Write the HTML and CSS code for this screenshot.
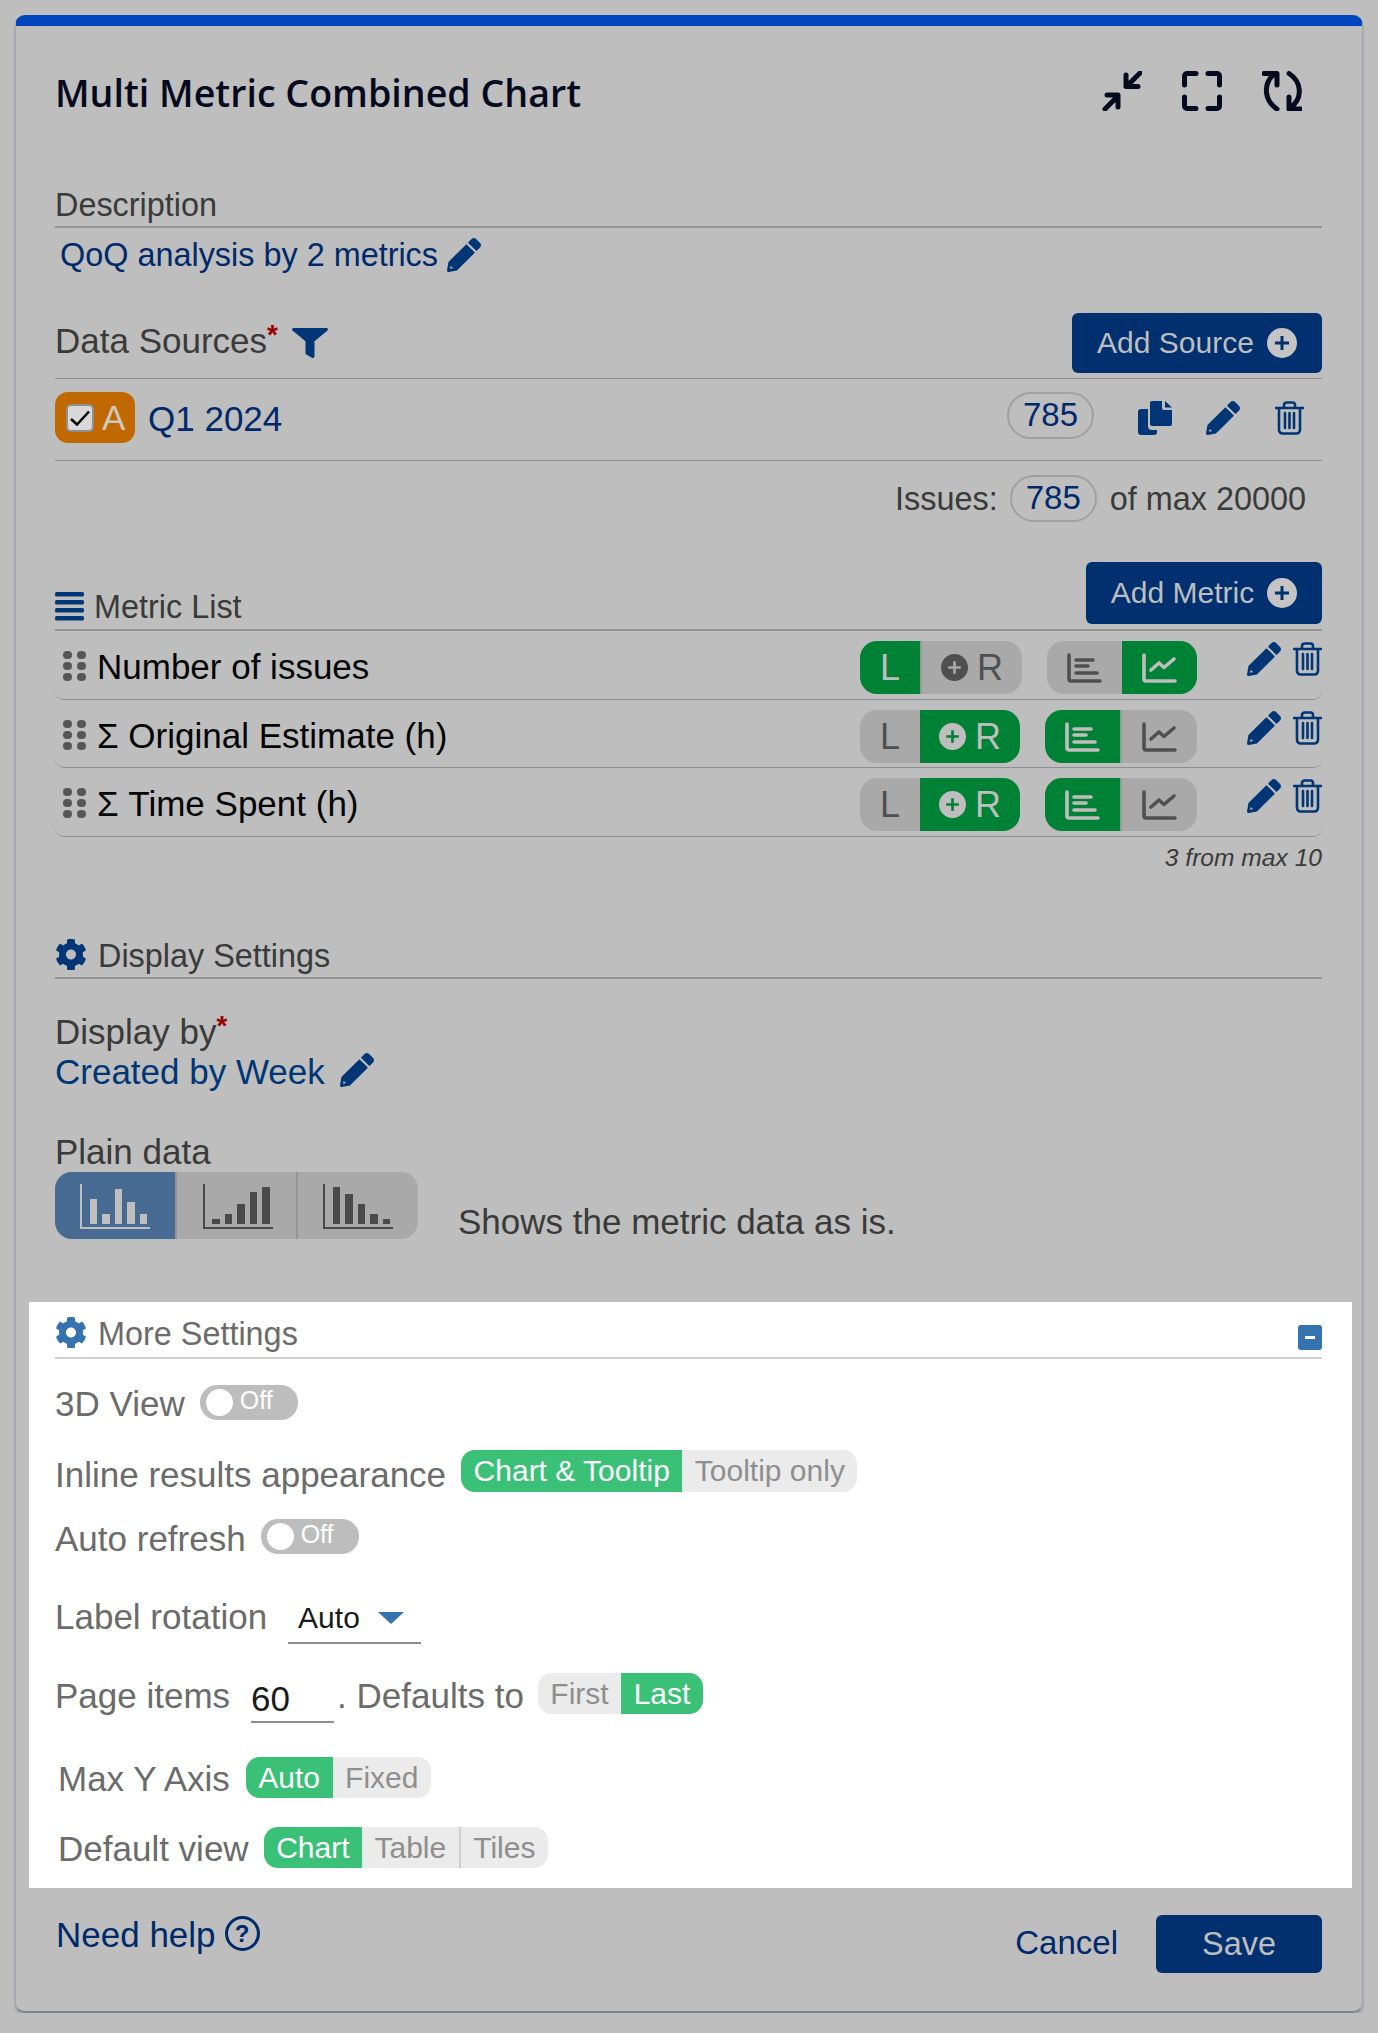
FILE: index.html
```html
<!DOCTYPE html>
<html lang="en">

<head>
    <meta charset="UTF-8">
    <meta name="viewport" content="width=device-width, initial-scale=1.0">
    <title>Multi Metric Combined Chart</title>
    <link rel="stylesheet" href="styles.css">
</head>

<body>
    <svg class="defs">
        <symbol id="pencil" viewBox="0 0 512 512">
            <path d="M497.9 142.1l-46.1 46.1c-4.7 4.7-12.3 4.7-17 0l-111-111c-4.7-4.7-4.7-12.3 0-17l46.1-46.1c18.7-18.7 49.1-18.7 67.9 0l60.1 60.1c18.800 18.700 18.800 49.100 0 67.900zM284.2 99.8L21.6 362.4.4 483.9c-2.9 16.4 11.4 30.6 27.8 27.8l121.5-21.3 262.6-262.6c4.7-4.7 4.7-12.3 0-17l-111-111c-4.8-4.7-12.4-4.7-17.1 0zM56 420L44 462L92 452z" fill="currentColor" fill-rule="evenodd"/>
        </symbol>
        <symbol id="trash" viewBox="0 0 29 34">
            <path d="M1 7H28M9 7V4a2.5 2.5 0 0 1 2.5-2.500h6A2.5 2.5 0 0 1 20 4V7M4 7V29a3.5 3.5 0 0 0 3.500 3.500h14A3.5 3.5 0 0 0 25 29V7M10 12V27M14.500 12V27M19 12V27" fill="none" stroke="currentColor" stroke-width="2.600" stroke-linecap="round"/>
        </symbol>
        <symbol id="cog" viewBox="0 0 512 512">
            <path d="M487.4 315.7l-42.6-24.6c4.3-23.2 4.3-47 0-70.2l42.6-24.6c4.9-2.8 7.1-8.6 5.5-14-11.1-35.6-30-67.8-54.7-94.6-3.8-4.1-10-5.1-14.8-2.3L380.8 110c-17.9-15.4-38.5-27.3-60.8-35.1V25.8c0-5.6-3.9-10.5-9.4-11.7-36.7-8.2-74.3-7.8-109.2 0-5.5 1.2-9.4 6.1-9.4 11.7V75c-22.2 7.9-42.8 19.8-60.8 35.1L88.7 85.5c-4.9-2.8-11-1.9-14.8 2.3-24.7 26.7-43.6 58.9-54.7 94.6-1.7 5.4.6 11.2 5.5 14L67.3 221c-4.3 23.2-4.3 47 0 70.2l-42.6 24.6c-4.9 2.8-7.1 8.6-5.5 14 11.1 35.6 30 67.8 54.7 94.6 3.8 4.1 10 5.1 14.8 2.3l42.6-24.6c17.9 15.4 38.5 27.3 60.8 35.1v49.2c0 5.6 3.9 10.5 9.4 11.7 36.7 8.2 74.3 7.8 109.2 0 5.5-1.2 9.4-6.1 9.4-11.7v-49.2c22.2-7.9 42.8-19.8 60.8-35.1l42.6 24.6c4.9 2.8 11 1.9 14.8-2.3 24.7-26.7 43.6-58.9 54.7-94.6 1.5-5.5-.7-11.3-5.6-14.1zM256 336c-44.1 0-80-35.9-80-80s35.9-80 80-80 80 35.9 80 80-35.9 80-80 80z" fill="currentColor"/>
        </symbol>
        <symbol id="bars-h" viewBox="0 0 35 30">
            <path d="M2 2V26a2 2 0 0 0 2 2H33M9 7H26M9 13H21M9 20H30" fill="none" stroke="currentColor" stroke-width="3.6" stroke-linecap="round"/>
        </symbol>
        <symbol id="line" viewBox="0 0 35 30">
            <path d="M2 2V26a2 2 0 0 0 2 2H33M9 17L17 10L22 14.5L32 6" fill="none" stroke="currentColor" stroke-width="3.6" stroke-linecap="round" stroke-linejoin="round"/>
        </symbol>
        <symbol id="grip" viewBox="0 0 23 30">
            <g fill="currentColor">
                <rect x="0" y="0" width="9" height="8" rx="4"/><rect x="14" y="0" width="9" height="8" rx="4"/>
                <rect x="0" y="11" width="9" height="8" rx="4"/><rect x="14" y="11" width="9" height="8" rx="4"/>
                <rect x="0" y="22" width="9" height="8" rx="4"/><rect x="14" y="22" width="9" height="8" rx="4"/>
            </g>
        </symbol>
        <symbol id="plus" viewBox="0 0 30 30">
            <path d="M15 0a15 15 0 1 0 0 30a15 15 0 1 0 0-30zM13.500 8h3v5.500H22v3h-5.500V22h-3v-5.500H8v-3h5.500z" fill="currentColor" fill-rule="evenodd"/>
        </symbol>
    </svg>

    <div class="card">
        <div class="title-row">
            <h1 class="title">Multi Metric Combined Chart</h1>
            <div class="title-icons">
                <svg class="top-icon" viewBox="0 0 40 40"><path d="M38 2L26 14M24 4V15.5H36M3 38L15 26M5 24H16V36" /></svg>
                <svg class="top-icon" viewBox="0 0 40 40"><path d="M2.500 14V5a2.500 2.500 0 0 1 2.500-2.500H14M26 2.500H35a2.500 2.500 0 0 1 2.500 2.500V14M2.500 26V35a2.500 2.500 0 0 0 2.500 2.500H14M26 37.500H35a2.500 2.500 0 0 0 2.500-2.500V26" /></svg>
                <svg class="top-icon" viewBox="0 0 40 40"><path d="M15 38C3 30 0 14 12 3M2 2.500H15V14M27 2.500C39 10 42 27 28 37M27 26V38H39" /></svg>
            </div>
        </div>

        <div class="heading desc-heading">Description</div>
        <div class="desc-value">QoQ analysis by 2 metrics <svg class="pencil-sm"><use href="#pencil"/></svg></div>

        <div class="source-head">
            <div class="source-label">Data Sources<sup class="req">*</sup>
                <svg class="funnel" viewBox="0 0 512 512" preserveAspectRatio="none"><path d="M487.976 0H24.028C2.71 0-8.047 25.866 7.058 40.971L192 225.941V432c0 7.831 3.821 15.17 10.237 19.662l80 55.98C298.02 518.69 320 507.493 320 487.98V225.941l184.947-184.97C520.021 25.896 509.338 0 487.976 0z" fill="currentColor"/></svg>
            </div>
            <button class="btn add-source">Add Source <svg class="btn-plus"><use href="#plus"/></svg></button>
        </div>

        <div class="source-row">
            <div class="badge"><span class="check"><svg viewBox="0 0 20 16"><path d="M1 9L7 14.5L19 1.500" fill="none" stroke="#000" stroke-width="2.5"/></svg></span>A</div>
            <div class="source-name">Q1 2024</div>
            <div class="count source-count">785</div>
            <svg class="copy" viewBox="0 0 34 34"><path d="M14 0H24V7a2 2 0 0 0 2 2H34V23a2 2 0 0 1-2 2H14a2 2 0 0 1-2-2V2a2 2 0 0 1 2-2zM27 0L34 6.500H27zM10 8V25a4 4 0 0 0 4 4H19V31a3 3 0 0 1-3 3H3a3 3 0 0 1-3-3V11a3 3 0 0 1 3-3z" fill="currentColor"/></svg>
            <svg class="pencil-sm gap-pencil"><use href="#pencil"/></svg>
            <svg class="trash gap-trash"><use href="#trash"/></svg>
        </div>

        <div class="issues-row">Issues:<span class="count issues-count">785</span>of max 20000</div>

        <div class="metric-head">
            <div class="metric-label">
                <svg class="list-icon" viewBox="0 0 29 29"><g fill="currentColor"><rect y="0" width="29" height="4.500" rx="1.500"/><rect y="8" width="29" height="4.500" rx="1.500"/><rect y="16" width="29" height="4.500" rx="1.500"/><rect y="24" width="29" height="4.500" rx="1.500"/></g></svg>
                Metric List
            </div>
            <button class="btn add-metric">Add Metric <svg class="btn-plus"><use href="#plus"/></svg></button>
        </div>

        <div class="metric-row">
            <svg class="grip"><use href="#grip"/></svg>
            <div class="metric-name">Number of issues</div>
            <div class="axis wide">
                <span class="axis-l on">L</span>
                <span class="axis-r"><svg class="plus"><use href="#plus"/></svg>R</span>
            </div>
            <div class="kind first-kind">
                <span class="kind-a"><svg class="kind-icon"><use href="#bars-h"/></svg></span>
                <span class="kind-b on"><svg class="kind-icon"><use href="#line"/></svg></span>
            </div>
            <svg class="pencil-sm row-pencil"><use href="#pencil"/></svg>
            <svg class="trash row-trash"><use href="#trash"/></svg>
        </div>
        <div class="metric-row row-two">
            <svg class="grip"><use href="#grip"/></svg>
            <div class="metric-name">Σ Original Estimate (h)</div>
            <div class="axis">
                <span class="axis-l">L</span>
                <span class="axis-r on"><svg class="plus"><use href="#plus"/></svg>R</span>
            </div>
            <div class="kind">
                <span class="kind-a on"><svg class="kind-icon"><use href="#bars-h"/></svg></span>
                <span class="kind-b sep"><svg class="kind-icon"><use href="#line"/></svg></span>
            </div>
            <svg class="pencil-sm row-pencil"><use href="#pencil"/></svg>
            <svg class="trash row-trash"><use href="#trash"/></svg>
        </div>
        <div class="metric-row">
            <svg class="grip"><use href="#grip"/></svg>
            <div class="metric-name">Σ Time Spent (h)</div>
            <div class="axis">
                <span class="axis-l">L</span>
                <span class="axis-r on"><svg class="plus"><use href="#plus"/></svg>R</span>
            </div>
            <div class="kind">
                <span class="kind-a on"><svg class="kind-icon"><use href="#bars-h"/></svg></span>
                <span class="kind-b sep"><svg class="kind-icon"><use href="#line"/></svg></span>
            </div>
            <svg class="pencil-sm row-pencil"><use href="#pencil"/></svg>
            <svg class="trash row-trash"><use href="#trash"/></svg>
        </div>
        <div class="metric-count">3 from max 10</div>

        <div class="heading settings-heading"><svg class="cog"><use href="#cog"/></svg>Display Settings</div>

        <div class="display-by">Display by<sup class="req">*</sup></div>
        <div class="display-value">Created by Week <svg class="pencil-sm"><use href="#pencil"/></svg></div>

        <div class="plain-label">Plain data</div>
        <div class="plain-row">
            <div class="plain-group">
                <span class="plain-btn on">
                    <svg class="plain-icon" viewBox="0 0 70 45"><path d="M0 0h2v43h68v2H0z"/><rect x="10" y="15" width="7" height="25"/><rect x="22" y="30" width="8" height="10"/><rect x="35" y="5" width="7" height="35"/><rect x="47" y="18" width="8" height="22"/><rect x="60" y="30" width="7" height="10"/></svg>
                </span>
                <span class="plain-btn">
                    <svg class="plain-icon" viewBox="0 0 70 45"><path d="M0 0h2v43h68v2H0z"/><rect x="9" y="35" width="8" height="5"/><rect x="22" y="30" width="7" height="10"/><rect x="34" y="20" width="8" height="20"/><rect x="47" y="8" width="7" height="32"/><rect x="59" y="3" width="8" height="37"/></svg>
                </span>
                <span class="plain-btn">
                    <svg class="plain-icon" viewBox="0 0 70 45"><path d="M0 0h2v43h68v2H0z"/><rect x="10" y="3" width="7" height="37"/><rect x="22" y="10" width="8" height="30"/><rect x="35" y="20" width="7" height="20"/><rect x="47" y="30" width="8" height="10"/><rect x="60" y="35" width="7" height="5"/></svg>
                </span>
            </div>
            <div class="plain-text">Shows the metric data as is.</div>
        </div>

        <section class="more">
            <div class="more-head">
                <div class="more-title"><svg class="cog"><use href="#cog"/></svg>More Settings</div>
                <span class="minus"></span>
            </div>

            <div class="opt view-3d">
                <span class="opt-top">3D View</span>
                <span class="toggle"><i class="knob"></i>Off</span>
            </div>
            <div class="opt inline-opt">
                <span class="opt-label">Inline results appearance</span>
                <span class="seg">
                    <b class="on">Chart &amp; Tooltip</b><b>Tooltip only</b>
                </span>
            </div>
            <div class="opt refresh-opt">
                <span>Auto refresh</span>
                <span class="toggle"><i class="knob"></i>Off</span>
            </div>
            <div class="opt rotation-opt">
                <span>Label rotation</span>
                <span class="select">Auto<i class="caret"></i></span>
            </div>
            <div class="opt page-opt">
                <span class="opt-label">Page items</span>
                <span class="num-input">60</span>
                <span class="opt-label defaults">. Defaults to</span>
                <span class="seg">
                    <b>First</b><b class="on">Last</b>
                </span>
            </div>
            <div class="opt axis-opt">
                <span class="opt-label">Max Y Axis</span>
                <span class="seg">
                    <b class="on">Auto</b><b>Fixed</b>
                </span>
            </div>
            <div class="opt view-opt">
                <span class="opt-label">Default view</span>
                <span class="seg">
                    <b class="on">Chart</b><b>Table</b><b class="line">Tiles</b>
                </span>
            </div>
        </section>

        <div class="foot">
            <div class="need-help">Need help <span class="help">?</span></div>
            <div class="cancel">Cancel</div>
            <button class="btn save">Save</button>
        </div>
    </div>
</body>

</html>
```

FILE: styles.css
```css
body {
    margin: 0;
    background-color: #bebebe;
    font-family: "Liberation Sans", Arial, sans-serif;
    font-size: 35px;
    line-height: 40px;
    color: #3a3a3a;
}

.defs {
    width: 0;
    height: 0;
    position: absolute;
}

.card {
    box-sizing: border-box;
    width: 1348px;
    height: 1998px;
    margin: 15px 0 0 15px;
    padding: 0 40px 0 39px;
    border: 1px solid #a0a3ad;
    border-top: 11px solid #0046bf;
    border-bottom: 2px solid #7f8492;
    border-radius: 10px;
    box-shadow: 0 3px 3px #989ca8;
}

.title-row {
    display: flex;
    justify-content: space-between;
    align-items: flex-start;
    height: 54px;
    margin-top: 40px;
}

.title {
    margin: 0;
    font-family: "Open Sans", sans-serif;
    font-size: 37.6px;
    font-weight: 600;
    line-height: 54px;
    color: #050a1e;
}

.title-icons {
    display: flex;
    gap: 40px;
    padding: 5px 20px 0 0;
}

.top-icon {
    width: 40px;
    height: 40px;
    fill: none;
    stroke: #050a1e;
    stroke-width: 5;
    stroke-linecap: round;
    stroke-linejoin: round;
}

.heading {
    font-size: 32.4px;
    line-height: 41px;
    border-bottom: 2px solid #949494;
}

.desc-heading {
    margin-top: 65px;
}

.desc-value {
    margin: 7px 0 0 5px;
    font-size: 32.4px;
    color: #00296b;
    display: flex;
    align-items: flex-start;
    gap: 9px;
}

.pencil-sm {
    width: 34px;
    height: 34px;
    color: #003675;
    flex: none;
}

.desc-value .pencil-sm {
    margin-top: 3px;
}

.source-head {
    display: flex;
    justify-content: space-between;
    height: 65px;
    margin-top: 38px;
    border-bottom: 1px solid #8e8e8e;
}

.source-label {
    display: flex;
    align-items: flex-start;
    margin-top: 8px;
}

.req {
    color: #9b0000;
    font-size: 28px;
    font-weight: bold;
    line-height: 28px;
    vertical-align: top;
}

.funnel {
    width: 36px;
    height: 30px;
    margin: 7px 0 0 14px;
    color: #003675;
}

.btn {
    display: flex;
    align-items: center;
    justify-content: center;
    box-sizing: border-box;
    border: 0;
    padding: 0;
    border-radius: 6px;
    background-color: #00306f;
    color: #bebebe;
    font-family: inherit;
    font-size: 30px;
}

.add-source {
    width: 250px;
    height: 60px;
}

.add-metric {
    width: 236px;
    height: 62px;
}

.btn-plus {
    width: 30px;
    height: 30px;
    margin-left: 13px;
    color: #c4c4c4;
}

.source-row {
    display: flex;
    align-items: flex-start;
    height: 82px;
    border-bottom: 1px solid #8e8e8e;
    box-sizing: border-box;
}

.badge {
    display: flex;
    align-items: center;
    width: 80px;
    height: 51px;
    margin-top: 13px;
    box-sizing: border-box;
    padding-left: 11px;
    border-radius: 13px;
    background-color: #bf6900;
    color: #cfc8bf;
}

.check {
    display: flex;
    align-items: center;
    justify-content: center;
    box-sizing: border-box;
    width: 28px;
    height: 28px;
    margin-right: 8px;
    border: 2px solid #8f8f8f;
    border-radius: 5px;
    background-color: #d8d8d8;
}

.check svg {
    width: 20px;
    height: 16px;
}

.source-name {
    margin: 20px 0 0 13px;
    color: #00296b;
}

.count {
    box-sizing: border-box;
    display: block;
    text-align: center;
    border: 2px solid #a0a0a0;
    border-radius: 24px;
    font-size: 33px;
    color: #00296b;
}

.source-count {
    width: 87px;
    height: 47px;
    margin: 13px 0 0 auto;
    line-height: 41px;
}

.copy {
    width: 34px;
    height: 34px;
    margin: 22px 0 0 44px;
    color: #003675;
}

.gap-pencil {
    margin: 22px 0 0 34px;
}

.trash {
    width: 29px;
    height: 34px;
    color: #003675;
    flex: none;
}

.gap-trash {
    margin: 22px 18px 0 35px;
}

.issues-row {
    display: flex;
    justify-content: flex-end;
    align-items: center;
    height: 47px;
    margin-top: 14px;
    padding-right: 16px;
    font-size: 32.4px;
}

.issues-count {
    width: 87px;
    height: 47px;
    margin: 0 13px 0 12px;
    line-height: 42px;
}

.metric-head {
    display: flex;
    justify-content: space-between;
    height: 67px;
    margin-top: 40px;
    border-bottom: 2px solid #949494;
}

.metric-label {
    display: flex;
    align-items: flex-start;
    margin-top: 25px;
    font-size: 32.4px;
}

.list-icon {
    width: 29px;
    height: 29px;
    margin: 5px 10px 0 0;
    color: #003675;
}

.metric-row {
    display: flex;
    align-items: flex-start;
    box-sizing: border-box;
    height: 69px;
    border-bottom: 1px solid #8e8e8e;
    border-radius: 0 0 9px 9px;
}

.row-two {
    height: 68px;
}

.grip {
    width: 23px;
    height: 30px;
    margin: 20px 11px 0 8px;
    color: #565656;
    flex: none;
}

.metric-name {
    margin-top: 16px;
    color: #050505;
    flex: 1;
}

.axis,
.kind {
    display: flex;
    height: 53px;
    margin-top: 10px;
    border-radius: 17px;
    overflow: hidden;
    background-color: #a9a9a9;
    color: #4f4f4f;
    font-size: 36px;
    line-height: 53px;
}

.on {
    background-color: #008236;
    color: #bebebe;
}

.axis {
    width: 160px;
}

.axis.wide {
    width: 162px;
}

.axis-l {
    width: 60px;
    text-align: center;
}

.axis-r {
    flex: 1;
    display: flex;
    align-items: center;
    justify-content: center;
    gap: 9px;
}

.axis.wide .axis-r {
    border-left: 2px solid #999;
}

.plus {
    width: 27px;
    height: 27px;
}

.kind {
    width: 152px;
    margin-left: 25px;
}

.first-kind {
    width: 150px;
}

.kind-a,
.kind-b {
    display: flex;
    align-items: center;
    justify-content: center;
    flex: 1;
}

.kind-b.sep {
    border-left: 2px solid #999;
}

.kind-icon {
    width: 35px;
    height: 30px;
}

.row-pencil {
    margin: 11px 0 0 50px;
}

.row-trash {
    margin: 11px 0 0 12px;
}

.metric-count {
    margin-top: 1px;
    text-align: right;
    font-size: 24.6px;
    font-style: italic;
}

.settings-heading {
    display: flex;
    align-items: flex-start;
    margin-top: 58px;
}

.cog {
    width: 32px;
    height: 33px;
    margin: 2px 11px 0 0;
    color: #003675;
    flex: none;
}

.display-by {
    margin-top: 33px;
}

.display-value {
    display: flex;
    align-items: flex-start;
    gap: 15px;
    color: #003675;
}

.display-value .pencil-sm {
    margin-top: 1px;
}

.plain-label {
    margin-top: 40px;
}

.plain-row {
    display: flex;
    align-items: flex-start;
}

.plain-group {
    display: flex;
    width: 363px;
    height: 67px;
    border-radius: 17px;
    overflow: hidden;
    background-color: #a9a9a9;
}

.plain-btn {
    display: flex;
    justify-content: center;
    align-items: flex-start;
    box-sizing: border-box;
    padding-top: 12px;
    width: 120px;
    fill: #4a4a4a;
}

.plain-btn.on {
    background-color: #466a91;
    fill: #bebebe;
}

.plain-btn:nth-child(2) {
    width: 123px;
    padding-left: 3px;
    border-left: 2px solid #949494;
    border-right: 2px solid #949494;
}

.plain-icon {
    width: 70px;
    height: 45px;
}

.plain-text {
    margin: 30px 0 0 40px;
}

.more {
    height: 586px;
    box-sizing: border-box;
    margin: 60px -30px 0 -26px;
    padding: 12px 30px 0 26px;
    background-color: #fff;
    color: #6b6b6b;
}

.more-head {
    display: flex;
    justify-content: space-between;
    height: 43px;
    border-bottom: 2px solid #d0d0d0;
}

.more-title {
    display: flex;
    align-items: flex-start;
    font-size: 32.4px;
}

.more-title .cog {
    color: #3572b0;
}

.minus {
    display: flex;
    align-items: center;
    justify-content: center;
    width: 24px;
    height: 25px;
    margin-top: 11px;
    border-radius: 3px;
    background-color: #3572b0;
}

.minus::before {
    content: "";
    width: 10px;
    height: 3px;
    background-color: #fff;
}

.opt {
    display: flex;
    align-items: flex-start;
}

.opt-label {
    margin-top: 2px;
}

.opt-top {
    margin-top: -1px;
}

.view-3d,
.refresh-opt {
    margin-top: 26px;
    gap: 15px;
}

.inline-opt {
    margin-top: 26px;
    gap: 15px;
    height: 43px;
}

.inline-opt .opt-label {
    margin-top: 5px;
}

.rotation-opt {
    margin-top: 38px;
    gap: 21px;
}

.page-opt {
    margin-top: 29px;
}

.page-opt .opt-label {
    margin-top: 3px;
}

.axis-opt {
    margin-top: 34px;
    height: 41px;
    padding-left: 3px;
    gap: 16px;
}

.view-opt {
    margin-top: 29px;
    height: 41px;
    padding-left: 3px;
    gap: 15px;
}

.toggle {
    display: flex;
    align-items: flex-start;
    box-sizing: border-box;
    width: 98px;
    height: 35px;
    padding: 4px 0 0 6px;
    border-radius: 17px;
    background-color: #bdbdbd;
    color: #fff;
    font-size: 25px;
    line-height: 22px;
}

.knob {
    width: 27px;
    height: 27px;
    margin-right: 7px;
    border-radius: 50%;
    background-color: #fff;
}

.seg {
    display: inline-flex;
    height: 41px;
    border-radius: 14px;
    overflow: hidden;
    background-color: #ebebeb;
    color: #8e8e8e;
    font-size: 30px;
    line-height: 41px;
}

.inline-opt .seg {
    height: 42px;
    line-height: 42px;
}

.seg b {
    font-weight: normal;
    padding: 0 12.5px;
}

.seg b.on {
    background-color: #3ac177;
    color: #fff;
}

.seg b.line {
    border-left: 2px solid #cfcfcf;
}

.select {
    display: flex;
    box-sizing: border-box;
    width: 133px;
    height: 47px;
    padding: 1px 0 0 10px;
    border-bottom: 2px solid #8e8e8e;
    color: #1a1a1a;
    font-size: 30px;
}

.caret {
    width: 0;
    height: 0;
    margin: 14px 0 0 18px;
    border-left: 13px solid transparent;
    border-right: 13px solid transparent;
    border-top: 12px solid #3572b0;
}

.num-input {
    box-sizing: border-box;
    width: 83px;
    height: 50px;
    margin: 0 3px 0 21px;
    padding-top: 6px;
    border-bottom: 2px solid #8e8e8e;
    color: #1a1a1a;
}

.defaults {
    margin-right: 14px;
}

.foot {
    display: flex;
    align-items: flex-start;
    margin-top: 27px;
}

.need-help {
    display: flex;
    align-items: flex-start;
    margin-left: 1px;
    color: #00296b;
    flex: 1;
    gap: 9px;
}

.help {
    box-sizing: border-box;
    width: 35px;
    height: 35px;
    margin-top: 1px;
    border: 3px solid #00296b;
    border-radius: 50%;
    font-size: 24px;
    font-weight: bold;
    line-height: 29px;
    text-align: center;
}

.cancel {
    margin: 8px 38px 0 0;
    font-size: 33px;
    color: #00296b;
}

.save {
    width: 166px;
    height: 58px;
    font-size: 32.4px;
}
```
